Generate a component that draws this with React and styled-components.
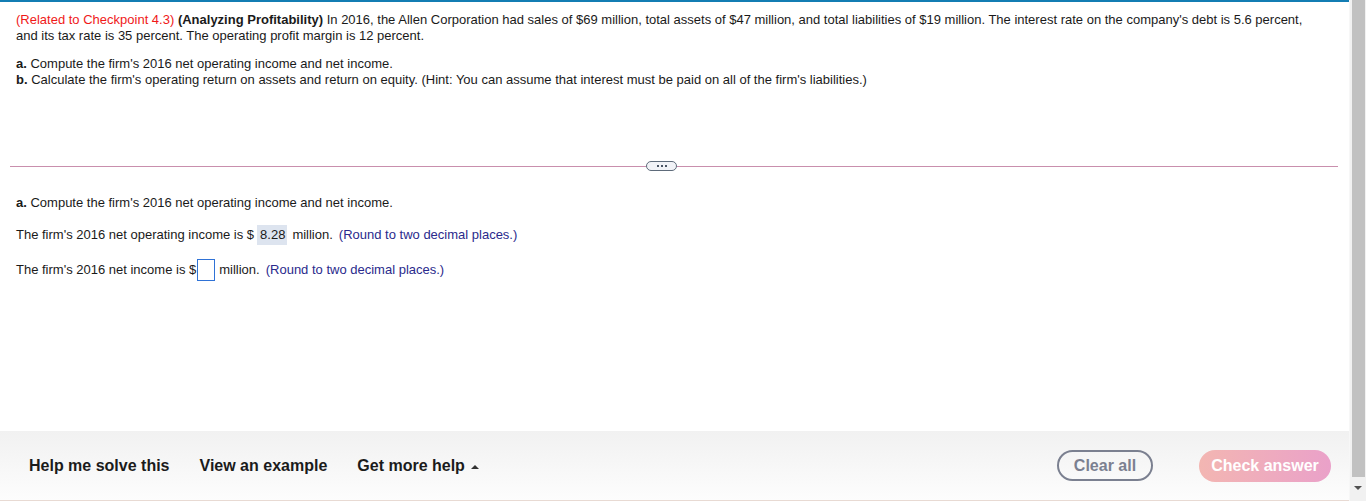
import React from 'react';
import styled, { createGlobalStyle } from 'styled-components';

const GlobalStyle = createGlobalStyle`
  html, body {
    margin: 0;
    padding: 0;
    height: 100%;
    overflow: hidden;
    background: #fff;
  }
  #root {
    height: 100%;
  }
`;

const Page = styled.div`
  display: flex;
  height: 501px;
  font-family: 'Liberation Sans', Arial, sans-serif;
  color: #1a1a1a;
`;

const Main = styled.div`
  flex: 1;
  display: flex;
  flex-direction: column;
  border-top: 2px solid #137db3;
  min-width: 0;
`;

const Question = styled.div`
  padding: 10px 30px 0 16px;
  font-size: 13px;
  line-height: 16px;
  height: 158px;
  box-sizing: border-box;
`;

const Para = styled.p`
  margin: 0 0 12px 0;
`;

const Source = styled.span`
  color: #f01919;
`;

const Divider = styled.div`
  display: flex;
  align-items: center;
  margin: 0 11px 0 10px;
  height: 12px;

  &::before,
  &::after {
    content: '';
    height: 1px;
    background: #c98fad;
  }
  &::before {
    width: 636px;
  }
  &::after {
    flex: 1;
  }
`;

const MoreButton = styled.button`
  width: 31px;
  height: 10px;
  padding: 0;
  border: 1.5px solid #5e6b7a;
  border-radius: 6px;
  background: #f1f3f7;
  display: flex;
  align-items: center;
  justify-content: center;
  gap: 2px;
  cursor: pointer;
`;

const Dot = styled.span`
  width: 2px;
  height: 2px;
  background: #4a5564;
`;

const Answer = styled.div`
  padding: 21px 16px 0 16px;
  font-size: 13px;
  line-height: 16px;
  flex: 1;
`;

const AnswerLine = styled.div`
  display: flex;
  align-items: center;
  height: 20px;
  margin-bottom: ${(p) => p.$gap || 0}px;
  white-space: pre;
`;

const Filled = styled.span`
  background: #dde4ef;
  padding: 2px 2px 2px 3px;
  margin: 0 5px 0 3px;
  line-height: 16px;
`;

const Blank = styled.span`
  display: inline-block;
  width: 16px;
  height: 20px;
  border: 1px solid #2f72d6;
  margin: 0 4px 0 1px;
  background: #fff;
`;

const Hint = styled.span`
  color: #2a2a8c;
  margin-left: 6px;
`;

const Footer = styled.div`
  height: 69px;
  display: flex;
  align-items: center;
  padding: 0 18px 0 29px;
  background: linear-gradient(#f1f1f1, #fdfdfd);
  border-bottom: 1px solid #e8dad3;
`;

const HelpLink = styled.button`
  background: none;
  border: none;
  padding: 0;
  margin-right: 30px;
  font-family: 'Liberation Sans', Arial, sans-serif;
  font-size: 16px;
  font-weight: 600;
  color: #1b1b1b;
  cursor: pointer;
  display: flex;
  align-items: center;
  gap: 6px;
`;

const Caret = styled.span`
  width: 0;
  height: 0;
  border-left: 4px solid transparent;
  border-right: 4px solid transparent;
  border-bottom: 4px solid #333;
  margin-top: 2px;
`;

const Spacer = styled.div`
  flex: 1;
`;

const ClearButton = styled.button`
  height: 31px;
  width: 96px;
  border: 2px solid #7b8090;
  border-radius: 16px;
  background: transparent;
  color: #7b8090;
  font-family: 'Liberation Sans', Arial, sans-serif;
  font-weight: bold;
  font-size: 16px;
  margin-right: 46px;
  cursor: pointer;
`;

const CheckButton = styled.button`
  height: 32px;
  width: 132px;
  border: none;
  border-radius: 16px;
  background: linear-gradient(90deg, #f3b6b2, #eaa1c9);
  color: #fff;
  font-family: 'Liberation Sans', Arial, sans-serif;
  font-weight: bold;
  font-size: 16px;
  cursor: default;
`;

const Scrollbar = styled.div`
  width: 17px;
  background: #f1f1f1;
  display: flex;
  flex-direction: column;
  align-items: center;
  border-left: 1px solid #f7f7f7;
  box-sizing: border-box;
`;

const Thumb = styled.div`
  width: 13px;
  height: 477px;
  background: #c1c1c1;
`;

const ArrowDown = styled.div`
  margin-top: 9px;
  width: 0;
  height: 0;
  border-left: 4px solid transparent;
  border-right: 4px solid transparent;
  border-top: 4px solid #505050;
`;

const App = () => {
  return (
    <>
      <GlobalStyle />
      <Page>
        <Main>
          <Question>
            <Para>
              <Source>(Related to Checkpoint 4.3)</Source>{' '}
              <b>(Analyzing Profitability)</b> In 2016, the Allen Corporation had sales of $69 million, total
              assets of $47 million, and total liabilities of $19 million. The interest rate on the company's debt
              is 5.6 percent, and its tax rate is 35 percent. The operating profit margin is 12 percent.
            </Para>
            <div>
              <b>a.</b> Compute the firm's 2016 net operating income and net income.
            </div>
            <div>
              <b>b.</b> Calculate the firm's operating return on assets and return on equity. (Hint: You can assume
              that interest must be paid on all of the firm's liabilities.)
            </div>
          </Question>
          <Divider>
            <MoreButton aria-label="more">
              <Dot />
              <Dot />
              <Dot />
            </MoreButton>
          </Divider>
          <Answer>
            <AnswerLine $gap={12}>
              <span>
                <b>a.</b> Compute the firm's 2016 net operating income and net income.
              </span>
            </AnswerLine>
            <AnswerLine $gap={15}>
              The firm's 2016 net operating income is $<Filled>8.28</Filled>million.<Hint>(Round to two decimal places.)</Hint>
            </AnswerLine>
            <AnswerLine>
              The firm's 2016 net income is $<Blank />million.<Hint>(Round to two decimal places.)</Hint>
            </AnswerLine>
          </Answer>
          <Footer>
            <HelpLink>Help me solve this</HelpLink>
            <HelpLink>View an example</HelpLink>
            <HelpLink>
              Get more help <Caret />
            </HelpLink>
            <Spacer />
            <ClearButton>Clear all</ClearButton>
            <CheckButton>Check answer</CheckButton>
          </Footer>
        </Main>
        <Scrollbar>
          <Thumb />
          <ArrowDown />
        </Scrollbar>
      </Page>
    </>
  );
};

export default App;
